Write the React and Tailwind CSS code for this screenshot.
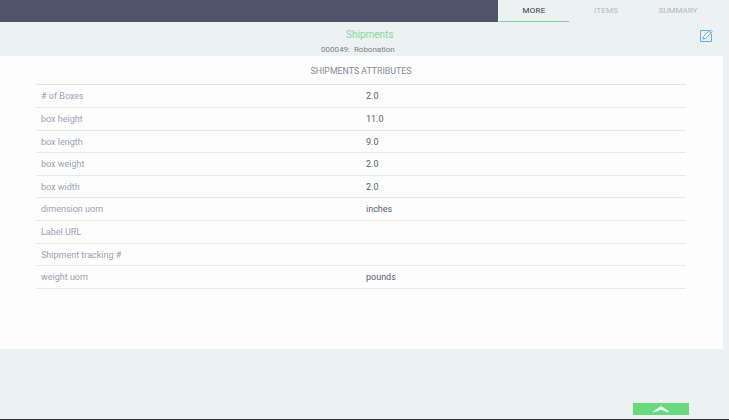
import React from 'react';

const rows = [
  ['# of Boxes', '2.0'],
  ['box height', '11.0'],
  ['box length', '9.0'],
  ['box weight', '2.0'],
  ['box width', '2.0'],
  ['dimension uom', 'inches'],
  ['Label URL', ''],
  ['Shipment tracking #', ''],
  ['weight uom', 'pounds'],
];

function EditIcon() {
  return (
    <svg width="13" height="13" viewBox="0 0 13 13" fill="none" stroke="#62aee6" strokeWidth="1">
      <path d="M0.5 1.5H8.5M0.5 1.5V12.5H11.5V5" />
      <path d="M3.5 7.5 9.8 1.2a.8.8 0 0 1 1.1 0l1 1a.8.8 0 0 1 0 1.1L5.5 9.5l-2.6.6z" />
      <path d="M9 2.2 11 4.2" />
    </svg>
  );
}

export default function App() {
  return (
    <div className="w-[729px] h-[420px] overflow-hidden flex flex-col bg-[#ecf1f1] font-['Roboto',sans-serif]">
      <div className="flex h-[22px] shrink-0">
        <div className="flex-1 bg-[#50536a]"></div>
        <div className="w-[231px] flex pl-px text-[8px]">
          <div className="w-[70px] flex items-center justify-center border-b border-[#7fce95] text-[#3a3340] tracking-[0.2px]">MORE</div>
          <div className="w-[74px] flex items-center justify-center text-[#b4b8c4] tracking-[0.2px]">ITEMS</div>
          <div className="w-[70px] flex items-center justify-center text-[#b4b8c4]">SUMMARY</div>
        </div>
      </div>

      <div className="h-[34px] shrink-0 flex flex-col relative">
        <div className="text-[10px] leading-[13px] mt-[6px] ml-[346px] text-[#86d79c]">Shipments</div>
        <div className="text-[8px] leading-[10px] mt-[4px] ml-[321px] text-[#7c8089] whitespace-pre">000049:  Robonation</div>
        <div className="absolute right-[16px] top-[7px]">
          <EditIcon />
        </div>
      </div>

      <div className="w-[723px] h-[293px] shrink-0 bg-[#fdfdfd] pl-[36px] pr-[37px]">
        <div className="h-[29.4px] flex items-center justify-center pt-[2px] text-[8.8px] text-[#85889a] border-b border-[#e1e3ec]">
          SHIPMENTS ATTRIBUTES
        </div>
        {rows.map(([label, value]) => (
          <div key={label} className="h-[22.6px] flex items-center pl-[5px] pt-[2px] text-[9px] border-b border-[#e8e9ef]">
            <div className="w-[325px] text-[#9c9fb4]">{label}</div>
            <div className="text-[#565b70]">{value}</div>
          </div>
        ))}
      </div>

      <div className="flex-1 flex flex-col">
        <div className="flex-1 flex items-end justify-end pr-[40px] pb-[4px]">
          <button className="w-[56px] h-[12px] bg-[#68d97c] flex items-center justify-center">
            <svg width="16" height="7" viewBox="0 0 16 7" fill="#ffffff">
              <path d="M8 0 16 5.5 15 6.5 8 3.5 1 6.5 0 5.5z" />
            </svg>
          </button>
        </div>
        <div className="h-px bg-[#2a2d33] shrink-0"></div>
      </div>
    </div>
  );
}
